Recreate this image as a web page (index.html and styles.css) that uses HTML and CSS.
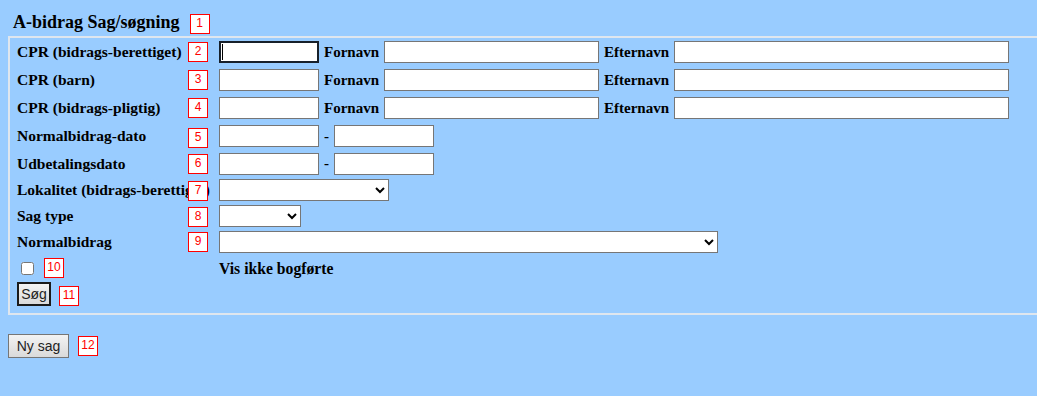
FILE: index.html
```html
<!DOCTYPE html>
<html lang="da">
<head>
    <meta charset="UTF-8">
    <meta name="viewport" content="width=device-width, initial-scale=1.0">
    <title>A-bidrag Sag/søgning</title>
    <link rel="stylesheet" href="styles.css">
</head>
<body>
    <div class="head">
        <h1>A-bidrag Sag/søgning</h1>
        <span class="tag">1</span>
    </div>

    <div class="box">
        <div class="row">
            <div class="cell-label">CPR (bidrags-berettiget)<span class="tag">2</span></div>
            <span class="caret-wrap"><input type="text" class="field cpr focused"><span class="caret"></span></span>
            <span>Fornavn</span>
            <input type="text" class="field first">
            <span>Efternavn</span>
            <input type="text" class="field last">
        </div>
        <div class="row">
            <div class="cell-label">CPR (barn)<span class="tag">3</span></div>
            <input type="text" class="field cpr">
            <span>Fornavn</span>
            <input type="text" class="field first">
            <span>Efternavn</span>
            <input type="text" class="field last">
        </div>
        <div class="row">
            <div class="cell-label">CPR (bidrags-pligtig)<span class="tag">4</span></div>
            <input type="text" class="field cpr">
            <span>Fornavn</span>
            <input type="text" class="field first">
            <span>Efternavn</span>
            <input type="text" class="field last">
        </div>
        <div class="row">
            <div class="cell-label">Normalbidrag-dato<span class="tag low">5</span></div>
            <input type="text" class="field cpr">
            <span>-</span>
            <input type="text" class="field cpr">
        </div>
        <div class="row mid">
            <div class="cell-label">Udbetalingsdato<span class="tag">6</span></div>
            <input type="text" class="field cpr">
            <span>-</span>
            <input type="text" class="field cpr">
        </div>
        <div class="row short">
            <div class="cell-label">Lokalitet (bidrags-berettiget)<span class="tag">7</span></div>
            <select class="pick local"><option></option></select>
        </div>
        <div class="row short">
            <div class="cell-label">Sag type<span class="tag">8</span></div>
            <select class="pick type"><option></option></select>
        </div>
        <div class="row short">
            <div class="cell-label">Normalbidrag<span class="tag high">9</span></div>
            <select class="pick normal"><option></option></select>
        </div>
        <div class="row short">
            <div class="cell-label">
                <input type="checkbox" id="notBooked">
                <span class="tag inline">10</span>
            </div>
            <label for="notBooked" class="check-text">Vis ikke bogførte</label>
        </div>
        <div class="row-button">
            <button class="button default">Søg</button>
            <span class="tag inline">11</span>
        </div>
    </div>

    <div class="row-new">
        <button class="button new">Ny sag</button>
        <span class="tag inline">12</span>
    </div>
</body>
</html>
```

FILE: styles.css
```css
body {
    margin: 8px 0 8px 8px;
    background-color: #99ccff;
    color: #000;
    font-family: "Liberation Serif", "Times New Roman", serif;
    font-size: 15px;
    font-weight: bold;
}
.head {
    display: flex;
    align-items: center;
    height: 28px;
    padding-left: 5px;
}
.head h1 {
    margin: 0;
    font-size: 18px;
}
.head .tag {
    position: static;
    align-self: flex-end;
    margin: 0 0 2px 10px;
}
.tag {
    position: absolute;
    top: 4px;
    right: 11px;
    width: 20px;
    height: 20px;
    box-sizing: border-box;
    border: 1px solid #ff0000;
    background: #fff;
    color: #ff0000;
    font-family: "Liberation Sans", Arial, sans-serif;
    font-size: 12px;
    font-weight: normal;
    line-height: 17px;
    text-align: center;
}
.tag.low {
    top: 6px;
}
.tag.high {
    top: 3px;
}
.tag.inline {
    position: static;
    flex: none;
}
.box {
    border-top: 2px solid #dfe6ee;
    border-bottom: 2px solid #dfe6ee;
    border-left: 2px solid #dfe6ee;
    padding: 0 0 7px 7px;
}
.row {
    display: flex;
    align-items: center;
    gap: 5px;
    height: 28px;
}
.row.mid {
    height: 27px;
}
.row.short {
    height: 26px;
}
.cell-label {
    position: relative;
    align-self: stretch;
    display: flex;
    align-items: center;
    flex: none;
    width: 202px;
    margin-right: -5px;
    font-size: 15.5px;
    white-space: nowrap;
}
.cell-label input[type="checkbox"] {
    margin: 3px 3px 3px 4px;
    width: 13px;
    height: 13px;
}
.cell-label .tag.inline {
    margin-left: 7px;
}
.check-text {
    font-size: 15.7px;
    padding-top: 1px;
}
.field {
    height: 22px;
    box-sizing: border-box;
    margin: 0;
    padding: 1px 2px;
    border: 1px solid #767676;
    border-radius: 0;
    background: #fff;
    font-family: "Liberation Sans", Arial, sans-serif;
    font-size: 13px;
}
.field.cpr {
    width: 100px;
}
.field.first {
    width: 215px;
}
.field.last {
    width: 335px;
}
.field.focused {
    border: 2px solid #17202a;
    outline: none;
}
.caret-wrap {
    position: relative;
    display: flex;
}
.caret {
    position: absolute;
    left: 3px;
    top: 3px;
    width: 1px;
    height: 16px;
    background: #000;
}
.pick {
    height: 22px;
    box-sizing: border-box;
    margin: 0;
    border: 1px solid #767676;
    border-radius: 0;
    background-color: #fff;
    font-family: "Liberation Sans", Arial, sans-serif;
    font-size: 13px;
}
.pick.local {
    width: 170px;
}
.pick.type {
    width: 82px;
}
.pick.normal {
    width: 499px;
}
.row-button {
    display: flex;
    align-items: flex-end;
    padding-top: 1px;
}
.row-button .tag {
    margin-left: 8px;
}
.button {
    height: 24px;
    box-sizing: border-box;
    margin: 0;
    padding: 0;
    background: linear-gradient(#f3f3f3, #dadada);
    color: #222;
    font-family: "Liberation Sans", Arial, sans-serif;
    font-size: 14px;
    font-weight: normal;
    cursor: pointer;
}
.button.default {
    width: 34px;
    border: 2px solid #1b1b1b;
}
.button.new {
    width: 61px;
    border: 1px solid #767676;
}
.row-new {
    display: flex;
    align-items: center;
    margin-top: 19px;
}
.row-new .tag {
    margin-left: 9px;
}
```
